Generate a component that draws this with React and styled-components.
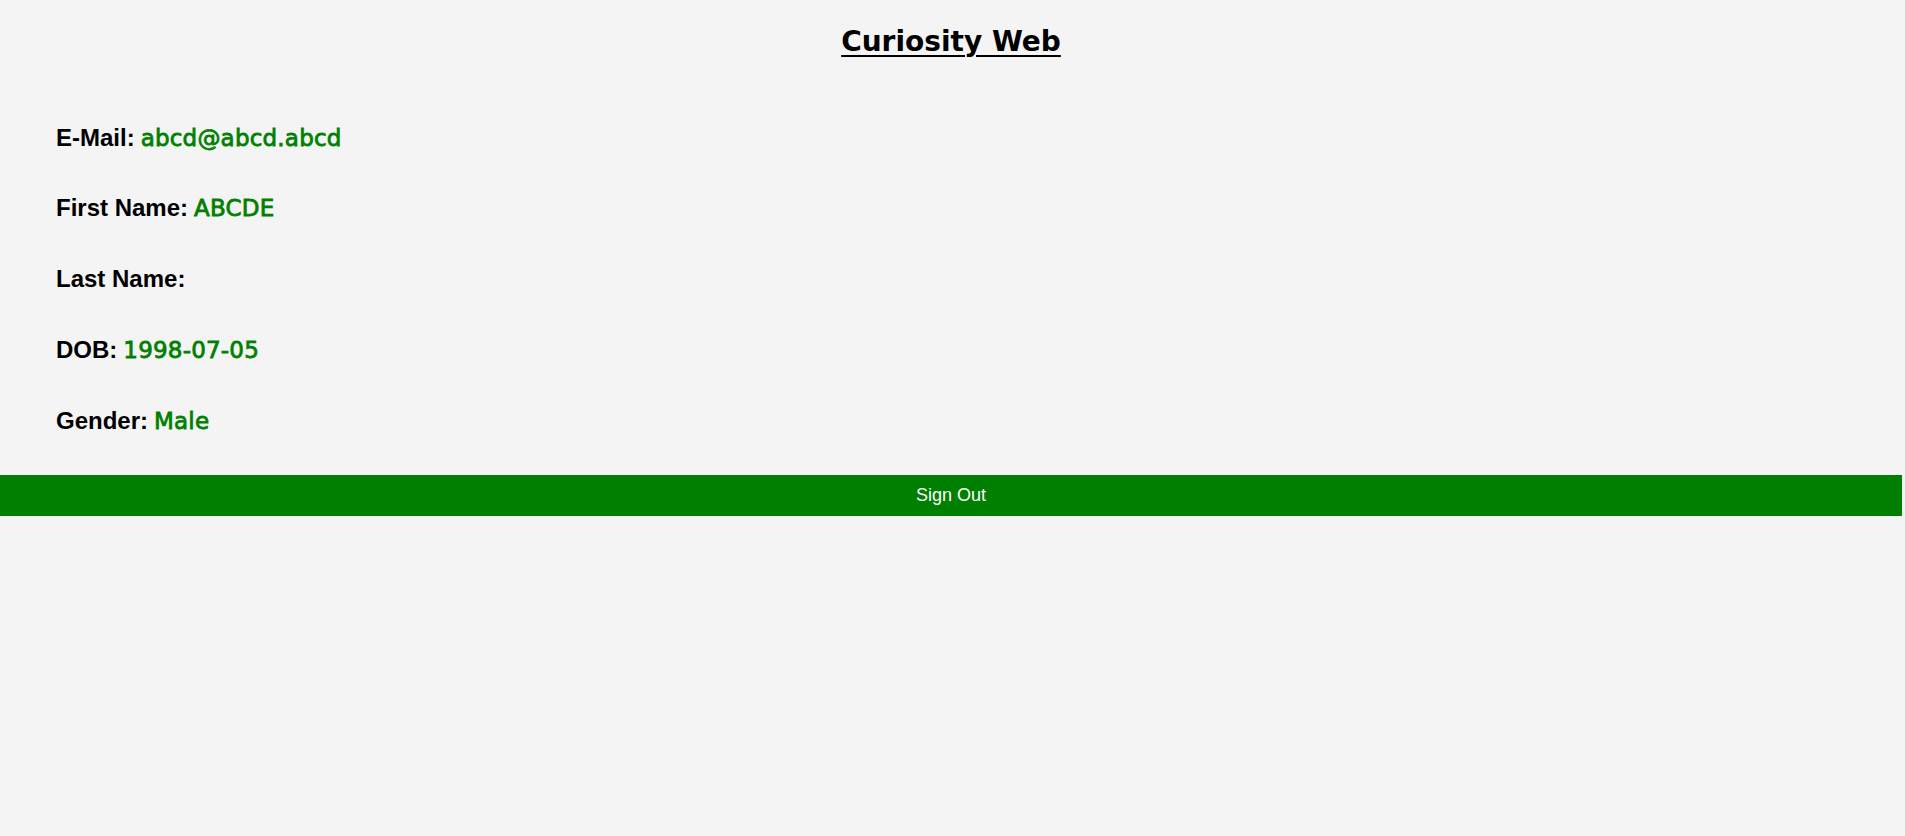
import React from "react";
import styled, { createGlobalStyle } from "styled-components";

const GlobalStyle = createGlobalStyle`
  html, body {
    margin: 0;
    padding: 0;
    background: #f4f4f4;
  }
  body {
    font-family: "Liberation Sans", Arial, sans-serif;
    color: #000;
  }
`;

const Page = styled.div`
  width: calc(100% - 3px);
  display: flex;
  flex-direction: column;
`;

const Title = styled.h1`
  margin: 26px 0 0;
  text-align: center;
  font-family: "Comic Sans MS", "DejaVu Sans", sans-serif;
  font-weight: bold;
  font-size: 28px;
  line-height: 1.164;
  text-decoration: underline;
  text-decoration-thickness: 2px;
  text-underline-offset: 4px;
`;

const Details = styled.div`
  display: flex;
  flex-direction: column;
  gap: 40.75px;
  padding: 64px 0 0 56px;
`;

const Row = styled.div`
  font-family: "Liberation Sans", Arial, sans-serif;
  font-size: 24px;
  line-height: 30px;
  height: 30px;
  white-space: nowrap;
`;

const Label = styled.span`
  font-weight: bold;
`;

const Value = styled.span`
  font-family: "Comic Sans MS", "DejaVu Sans", sans-serif;
  font-size: 23px;
  color: #008000;
  -webkit-text-stroke: 0.8px #008000;
  letter-spacing: 0.2px;
  margin-left: 6px;
`;

const SignOut = styled.button`
  margin-top: 39px;
  width: 100%;
  height: 41px;
  border: none;
  background: #008000;
  color: #fff;
  font-family: "Liberation Sans", Arial, sans-serif;
  font-size: 18px;
  cursor: pointer;
  padding: 0;
`;

const fields = [
  { label: "E-Mail:", value: "abcd@abcd.abcd" },
  { label: "First Name:", value: "ABCDE" },
  { label: "Last Name:", value: "" },
  { label: "DOB:", value: "1998-07-05" },
  { label: "Gender:", value: "Male" },
];

export default function App() {
  return (
    <>
      <GlobalStyle />
      <Page>
        <Title>Curiosity Web</Title>
        <Details>
          {fields.map((f) => (
            <Row key={f.label}>
              <Label>{f.label}</Label>
              {f.value && <Value>{f.value}</Value>}
            </Row>
          ))}
        </Details>
        <SignOut>Sign Out</SignOut>
      </Page>
    </>
  );
}
